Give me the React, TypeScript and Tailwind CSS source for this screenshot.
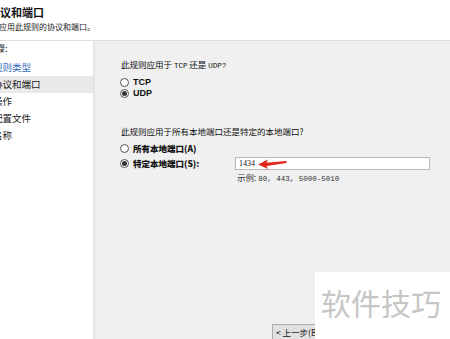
import React from "react";

const font = { fontFamily: '"Noto Sans CJK SC", "Noto Sans", sans-serif' };

const Radio = ({ checked }: { checked?: boolean }) => (
  <span className="flex h-[9px] w-[9px] shrink-0 items-center justify-center rounded-full border border-[#555] bg-white">
    {checked && <span className="h-[5px] w-[5px] rounded-full bg-[#333]" />}
  </span>
);

const steps = ["规则类型", "协议和端口", "操作", "配置文件", "名称"];

export default function App() {
  return (
    <div
      className="relative flex h-[339px] w-[450px] flex-col overflow-hidden bg-white text-[#111]"
      style={font}
    >
      {/* header */}
      <div className="h-[41px] shrink-0 border-b border-[#dedede] bg-white pt-[4px]">
        <div className="-ml-[11px] h-[16px] whitespace-nowrap text-[11px] font-bold leading-[16px]">
          协议和端口
        </div>
        <div className="-ml-[17px] mt-[1px] h-[12px] whitespace-nowrap text-[8px] leading-[12px] text-[#222]">
          指定应用此规则的协议和端口。
        </div>
      </div>

      <div className="flex flex-1">
        {/* steps */}
        <div className="w-[95px] shrink-0 border-r-2 border-[#e4e4e4] bg-white pt-[2px]">
          <div className="-ml-[13px] h-[12px] whitespace-nowrap text-[9px] leading-[12px]">
            步骤:
          </div>
          <div className="mt-[4px]">
            {steps.map((s, i) => (
              <div
                key={s}
                className={`h-[17px] whitespace-nowrap text-[9.5px] leading-[17px] ${
                  i === 1 ? "bg-[#e9e9e9]" : ""
                } ${i === 0 ? "text-[#2f6dbd]" : "text-[#1a1a1a]"}`}
              >
                <span className="-ml-[7px] inline-block">{s}</span>
              </div>
            ))}
          </div>
        </div>

        {/* content */}
        <div className="flex flex-1 flex-col bg-[#f0f0f0] pl-[25px] pt-[17px] text-[8.5px]">
          <div className="ml-[1px] h-[12px] whitespace-nowrap leading-[12px]">
            此规则应用于 <span style={{ fontFamily: '"Liberation Mono", monospace' }} className="text-[7.5px]">TCP</span> 还是 <span style={{ fontFamily: '"Liberation Mono", monospace' }} className="text-[7.5px]">UDP?</span>
          </div>
          <div className="mt-[7px] flex h-[11px] items-center gap-[4px]">
            <Radio />
            <span className="text-[9px] font-bold leading-[11px]" style={{ fontFamily: '"Liberation Sans", sans-serif' }}>TCP</span>
          </div>
          <div className="flex h-[11px] items-center gap-[4px]">
            <Radio checked />
            <span className="text-[9px] font-bold leading-[11px]" style={{ fontFamily: '"Liberation Sans", sans-serif' }}>UDP</span>
          </div>

          <div className="ml-[1px] mt-[26px] h-[12px] whitespace-nowrap leading-[12px]">
            此规则应用于所有本地端口还是特定的本地端口?
          </div>
          <div className="mt-[6px] flex h-[11px] items-center gap-[4px]">
            <Radio />
            <span className="font-black leading-[11px]">所有本地端口(A)</span>
          </div>
          <div className="mt-[3px] flex h-[13px] items-center">
            <div className="flex w-[115px] items-center gap-[4px]">
              <Radio checked />
              <span className="font-black leading-[11px]">特定本地端口(S):</span>
            </div>
            <div className="relative flex h-[13px] w-[195px] items-center border border-[#b8b8b8] bg-white pl-[3px]">
              <span className="text-[8px] leading-[11px]" style={{ fontFamily: '"Liberation Serif", serif' }}>1434</span>
              <svg className="absolute left-[22px] top-[1px]" width="29" height="10" viewBox="0 0 29 10">
                <path d="M0 5.5 L10 0.5 L8.5 3.8 L28.5 2 L28.5 4 L8.5 7 L10 10 Z" fill="#e3261b" />
              </svg>
            </div>
          </div>
          <div className="ml-[117px] mt-[1px] h-[12px] whitespace-nowrap leading-[12px] text-[#333]">
            示例: <span style={{ fontFamily: '"Liberation Mono", monospace' }} className="text-[7.5px]">80, 443, 5000-5010</span>
          </div>

          <div className="mb-[-3px] mt-auto flex pl-[152px]">
            <div className="h-[18px] w-[60px] border border-[#adadad] bg-[#e1e1e1] pl-[3px] text-[8.5px] leading-[14px]">
              &lt; 上一步(B)
            </div>
          </div>
        </div>
      </div>

      {/* watermark */}
      <div className="absolute bottom-0 left-[315px] right-0 top-[272px] bg-white pl-[6px] pt-[12px]">
        <span className="whitespace-nowrap text-[30px] leading-[36px] text-[#c6c6c6]">软件技巧</span>
      </div>
    </div>
  );
}
